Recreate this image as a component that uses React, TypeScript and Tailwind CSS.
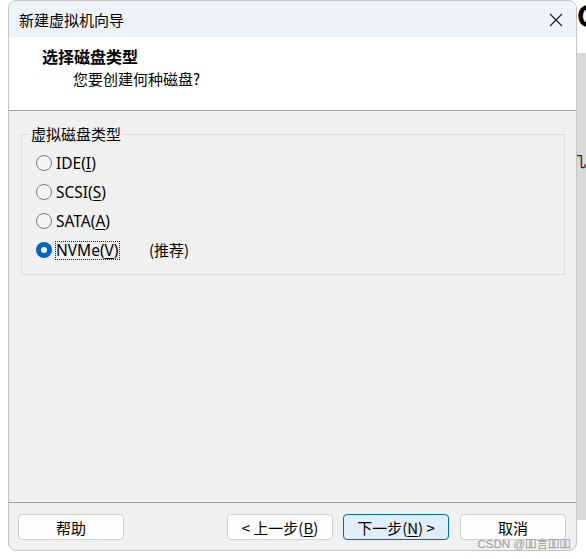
import * as React from 'react';

const cjk = "font-['Noto_Sans_CJK_SC',sans-serif]";
const ui = "font-['Noto_Sans','Noto_Sans_CJK_SC',sans-serif]";

interface DiskOption {
	label: string;
	key: string;
	checked?: boolean;
	note?: string;
}

const options: DiskOption[] = [
	{ label: 'IDE', key: 'I' },
	{ label: 'SCSI', key: 'S' },
	{ label: 'SATA', key: 'A' },
	{ label: 'NVMe', key: 'V', checked: true, note: '(推荐)' },
];

function Radio({ checked }: { checked?: boolean }) {
	if (checked) {
		return (
			<span className="flex h-[16px] w-[16px] shrink-0 items-center justify-center rounded-full bg-[#0067c0]">
				<span className="h-[6px] w-[6px] rounded-full bg-white" />
			</span>
		);
	}
	return (
		<span className="h-[16px] w-[16px] shrink-0 rounded-full border border-[#7a7a7a] bg-[#f4f4f4]" />
	);
}

function WizButton({
	children,
	primary,
	className = '',
}: {
	children: React.ReactNode;
	primary?: boolean;
	className?: string;
}) {
	return (
		<button
			className={`flex h-[26px] w-[106px] items-center justify-center rounded-[4px] border text-[15px] leading-none text-black ${cjk} ${
				primary ? 'border-[#0067c0] bg-[#e0eef9]' : 'border-[#d0d0d0] bg-[#fdfdfd]'
			} ${className}`}
		>
			{children}
		</button>
	);
}

export default function App() {
	return (
		<div className="relative flex h-[559px] w-[586px] overflow-hidden bg-white">
			{/* dialog */}
			<div className="ml-[8px] flex h-[551px] w-[569px] flex-col overflow-hidden rounded-[8px] border border-[#c4c4c4] bg-[#f0f0f0]">
				{/* title bar */}
				<div className="flex h-[36px] shrink-0 items-center justify-between bg-[#eef3f9] pl-[10px] pr-[13px]">
					<span className={`text-[15px] leading-none text-black ${cjk}`}>新建虚拟机向导</span>
					<svg width="14" height="14" viewBox="0 0 14 14" className="mt-[1px]">
						<path d="M1 1 L13 13 M13 1 L1 13" stroke="#1a1a1a" strokeWidth="1.1" />
					</svg>
				</div>

				{/* header */}
				<div className="flex h-[74px] shrink-0 flex-col border-b border-[#a0a0a0] bg-white">
					<div className={`pl-[33px] pt-[9px] text-[16px] font-bold leading-[20px] text-black ${cjk}`}>
						选择磁盘类型
					</div>
					<div className={`pl-[64px] pt-[3px] text-[15px] leading-[20px] text-black ${cjk}`}>
						您要创建何种磁盘?
					</div>
				</div>

				{/* body */}
				<div className="flex-1 px-[12px] pt-[15px]">
					<fieldset className="mr-[-1px] border border-[#dcdcdc] pb-[10px] pl-[7px]">
						<legend className={`px-[2px] text-[15px] leading-[16px] text-black ${cjk}`}>虚拟磁盘类型</legend>
						<div className="flex flex-col pt-[6px]">
							{options.map((o) => (
								<div key={o.label} className="flex h-[29px] items-center pl-[7px]">
									<Radio checked={o.checked} />
									<span className="ml-[4px] w-[93px]">
										<span
											className={`inline-block text-[15.5px] leading-[17px] text-black ${ui} ${
												o.checked ? 'outline-1 outline-dotted outline-[#222]' : ''
											}`}
										>
											{o.label}(<span className="underline underline-offset-2">{o.key}</span>)
										</span>
									</span>
									{o.note && (
										<span className={`text-[15px] leading-[17px] text-black ${cjk}`}>{o.note}</span>
									)}
								</div>
							))}
						</div>
					</fieldset>
				</div>

				{/* footer */}
				<div className="flex h-[48px] shrink-0 items-start border-t border-[#a0a0a0] pl-[9px] pr-[10px] pt-[11px]">
					<WizButton>帮助</WizButton>
					<div className="flex-1" />
					<WizButton>
						&lt; 上一步(<span className="underline underline-offset-2">B</span>)
					</WizButton>
					<WizButton primary className="ml-[10px]">
						下一步(<span className="underline underline-offset-2">N</span>) &gt;
					</WizButton>
					<WizButton className="ml-[11px]">取消</WizButton>
				</div>
			</div>

			{/* window behind, right edge */}
			<div className="flex w-[9px] flex-col">
				<div className="h-[53px] overflow-hidden bg-white">
					<span className="block font-['Inter',sans-serif] text-[30px] font-bold leading-[32px] text-black">
						C
					</span>
				</div>
				<div className="h-[467px] overflow-hidden bg-[#d9d9d9] pt-[99px]">
					<span className={`ml-[-6px] block text-[15px] leading-[17px] text-[#222] ${cjk}`}>几</span>
				</div>
				<div className="flex-1 bg-white" />
			</div>

			{/* watermark */}
			<span className="absolute bottom-[9px] right-[15px] font-['Liberation_Sans','Noto_Sans_CJK_SC',sans-serif] text-[11.5px] leading-none text-[#9a9a9a]">
				CSDN @吅言吅吅
			</span>
		</div>
	);
}
